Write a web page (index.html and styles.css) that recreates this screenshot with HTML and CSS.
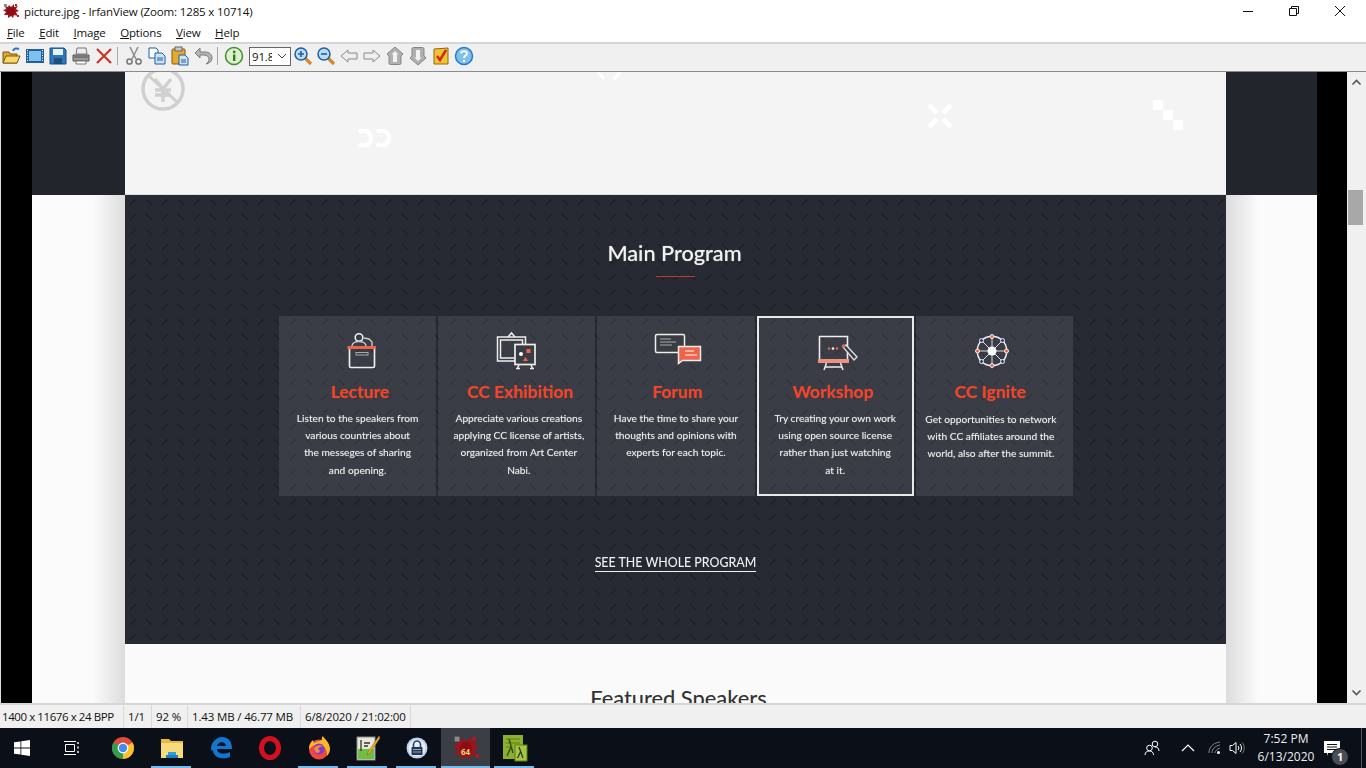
FILE: index.html
```html
<!DOCTYPE html>
<html lang="en">
<head>
    <meta charset="UTF-8">
    <title>picture.jpg - IrfanView (Zoom: 1285 x 10714)</title>
    <link rel="stylesheet" href="styles.css">
</head>
<body>

<svg class="defs" width="0" height="0">
    <symbol id="splat" viewBox="0 0 16 16">
        <path d="M6 2l2 2 3-3 0 3 4-1-2 3 3 2-3 1 2 4-4-1-1 3-2-2-3 2 0-3-4 0 2-3-3-2 3-1-1-3 3 1z" fill="#a3121a"/>
        <circle cx="8" cy="8" r="3.800" fill="#8a0e15"/>
        <path d="M1 1h3v3H1z" fill="#8c8c8c"/>
        <path d="M12 1h2v2h-2zM14 12h2v2h-2z" fill="#b5161f"/>
    </symbol>
</svg>

<!-- Title bar -->
<header class="titlebar">
    <svg class="app-icon" width="16" height="16"><use href="#splat"/></svg>
    <span class="title">picture.jpg - IrfanView (Zoom: 1285 x 10714)</span>
    <div class="win-buttons">
        <svg width="12" height="12" viewBox="0 0 12 12"><path d="M1 6.500h10" stroke="#111" fill="none"/></svg>
        <svg width="12" height="12" viewBox="0 0 12 12"><path d="M1.500 3.500h7v7h-7zM3.500 3.500v-2h7v7h-2" stroke="#111" fill="none"/></svg>
        <svg width="12" height="12" viewBox="0 0 12 12"><path d="M1 1l10 10M11 1L1 11" stroke="#111" fill="none"/></svg>
    </div>
</header>

<nav class="menubar">
    <span><u>F</u>ile</span>
    <span><u>E</u>dit</span>
    <span><u>I</u>mage</span>
    <span><u>O</u>ptions</span>
    <span><u>V</u>iew</span>
    <span><u>H</u>elp</span>
</nav>

<!-- Toolbar -->
<div class="toolbar">
    <button class="tool"><svg viewBox="0 0 20 20"><path d="M1 6h6l1 2h7v9H1z" fill="#e0a52a" stroke="#7a5a12"/><path d="M1 17l3-7h14l-3 7z" fill="#fbd766" stroke="#7a5a12"/><path d="M11 5c1-3 4-3 6-2" fill="none" stroke="#2b79c2" stroke-width="2"/></svg></button>
    <button class="tool"><svg viewBox="0 0 20 20"><rect x="1" y="3" width="18" height="14" fill="#1f5f9e"/><rect x="4" y="5" width="12" height="10" fill="#7fc0ee"/><path d="M2 4.500h1M2 7h1M2 9.500h1M2 12h1M2 14.500h1M17 4.500h1M17 7h1M17 9.500h1M17 12h1M17 14.500h1" stroke="#fff"/></svg></button>
    <button class="tool"><svg viewBox="0 0 20 20"><path d="M2 2h14l2 2v14H2z" fill="#2b78bd" stroke="#1b4f80"/><rect x="5" y="3" width="10" height="6" fill="#e8f1f8"/><rect x="6" y="12" width="8" height="6" fill="#1b4f80"/></svg></button>
    <button class="tool"><svg viewBox="0 0 20 20"><path d="M6 2h9l1 6H5z" fill="#eee" stroke="#777"/><path d="M2 9h16v6H2z" fill="#9a9a9a" stroke="#555"/><path d="M5 15h10v3H5z" fill="#fff" stroke="#777"/><path d="M3 11h14" stroke="#555"/></svg></button>
    <button class="tool"><svg viewBox="0 0 20 20"><path d="M3 3l14 14M17 3L3 17" stroke="#c9352b" stroke-width="2.200" fill="none"/></svg></button>
    <i class="tool-sep"></i>
    <button class="tool"><svg viewBox="0 0 20 20"><path d="M6 1l6 12M14 1L8 13" stroke="#8f8f8f" stroke-width="1.600" fill="none"/><circle cx="5.500" cy="15.500" r="2.600" fill="none" stroke="#777" stroke-width="1.500"/><circle cx="14.500" cy="15.500" r="2.600" fill="none" stroke="#777" stroke-width="1.500"/></svg></button>
    <button class="tool"><svg viewBox="0 0 20 20"><path d="M2 2h7l2 2v8H2z" fill="#fff" stroke="#1f5f9e"/><path d="M8 7h7l3 3v8H8z" fill="#cfe3f5" stroke="#1f5f9e"/><path d="M10 12h6M10 14h6" stroke="#1f5f9e"/></svg></button>
    <button class="tool"><svg viewBox="0 0 20 20"><rect x="2" y="3" width="13" height="15" rx="1" fill="#e8a92f" stroke="#7a5a12"/><rect x="5" y="1" width="7" height="4" fill="#c9c9c9" stroke="#666"/><path d="M9 9h6l3 3v7H9z" fill="#cfe3f5" stroke="#1f5f9e"/><path d="M11 14h5M11 16h5" stroke="#1f5f9e"/></svg></button>
    <button class="tool"><svg viewBox="0 0 20 20"><path d="M7 2L2 7l5 5V9h4c3 0 5 2 5 4s-1 4-3 5c4-1 6-3 6-6 0-4-3-6-7-6H7z" fill="#b5b5b5" stroke="#7a7a7a"/></svg></button>
    <i class="tool-sep tool-sep-b"></i>
    <button class="tool"><svg viewBox="0 0 20 20"><circle cx="10" cy="10" r="8.500" fill="#dff0d0" stroke="#3f8f2c" stroke-width="1.500"/><rect x="9" y="8.500" width="2.400" height="6.500" fill="#2f7f20"/><circle cx="10.200" cy="6" r="1.400" fill="#2f7f20"/></svg></button>
    <div class="combo"><span class="combo-val">91.8</span><svg width="10" height="6" viewBox="0 0 10 6"><path d="M1 1l4 4 4-4" fill="none" stroke="#444"/></svg></div>
    <button class="tool"><svg viewBox="0 0 20 20"><path d="M12 12l6 6" stroke="#d28a2a" stroke-width="3.200"/><circle cx="8" cy="8" r="6" fill="#bcdcf5" stroke="#1f5f9e" stroke-width="1.500"/><path d="M5 8h6M8 5v6" stroke="#1f5f9e" stroke-width="1.600"/></svg></button>
    <button class="tool"><svg viewBox="0 0 20 20"><path d="M12 12l6 6" stroke="#d28a2a" stroke-width="3.200"/><circle cx="8" cy="8" r="6" fill="#bcdcf5" stroke="#1f5f9e" stroke-width="1.500"/><path d="M5 8h6" stroke="#1f5f9e" stroke-width="1.600"/></svg></button>
    <button class="tool"><svg viewBox="0 0 20 20"><path d="M2 10l7-6v3h9v6H9v3z" fill="#eee" stroke="#8a8a8a"/></svg></button>
    <button class="tool"><svg viewBox="0 0 20 20"><path d="M18 10l-7-6v3H2v6h9v3z" fill="#eee" stroke="#8a8a8a"/></svg></button>
    <button class="tool"><svg viewBox="0 0 20 20"><path d="M10 1l8 7-2 2v7a1.500 1.500 0 01-1.500 1.500h-9A1.500 1.500 0 014 17v-7L2 8z" fill="#b0b0b0" stroke="#858585"/><path d="M10 5l3.500 3.500h-1.500V16H8V8.500H6.500z" fill="#f2f2f2"/></svg></button>
    <button class="tool"><svg viewBox="0 0 20 20"><path d="M10 19l8-7-2-2V3a1.500 1.500 0 00-1.500-1.500h-9A1.500 1.500 0 004 3v7l-2 2z" fill="#b0b0b0" stroke="#858585"/><path d="M10 15l3.500-3.500h-1.500V4H8v7.500H6.500z" fill="#f2f2f2"/></svg></button>
    <button class="tool"><svg viewBox="0 0 20 20"><path d="M3 3l14-1v16H3z" fill="#f2c230" stroke="#8a6a10"/><path d="M6 10l3 4 6-10" fill="none" stroke="#cf2a1c" stroke-width="2.500"/></svg></button>
    <button class="tool"><svg viewBox="0 0 20 20"><circle cx="10" cy="10" r="8.500" fill="#7cc0ee" stroke="#2b79c2" stroke-width="1.500"/><path d="M7 7.500c0-3 6-3 6 0 0 2-3 2-3 4.500" fill="none" stroke="#fff" stroke-width="2"/><circle cx="10" cy="15" r="1.200" fill="#fff"/></svg></button>
</div>

<!-- Image area -->
<main class="viewer">
    <div class="gutter gutter-l"></div>
    <div class="picture">

        <div class="band band-top">
            <div class="side side-dark"></div>
            <div class="hero">
                <svg class="deco deco-yen" width="46" height="46" viewBox="0 0 46 46">
                    <circle cx="23" cy="23" r="20" fill="none" stroke="#d0d0d0" stroke-width="3.500"/>
                    <path d="M15 13l8 10 8-10M23 23v13M15 24h16M15 29h16" fill="none" stroke="#d0d0d0" stroke-width="3.500"/>
                    <path d="M9 10l28 26" stroke="#d0d0d0" stroke-width="3"/>
                </svg>
                <svg class="deco deco-cc" width="36" height="18" viewBox="0 0 36 18">
                    <path d="M2 3a7.500 7.500 0 1 1 0 12M20 3a7.500 7.500 0 1 1 0 12" fill="none" stroke="#fff" stroke-width="4.500"/>
                </svg>
                <svg class="deco deco-x" width="26" height="26" viewBox="0 0 26 26">
                    <path d="M2 2l8 8M24 2l-8 8M2 24l8-8M24 24l-8-8" stroke="#fff" stroke-width="4.500"/>
                </svg>
                <svg class="deco deco-x2" width="26" height="12" viewBox="0 0 26 12">
                    <path d="M2 0l6 7M24 0l-6 7" stroke="#fff" stroke-width="3"/>
                </svg>
                <svg class="deco deco-squares" width="30" height="30" viewBox="0 0 30 30">
                    <path d="M0 0h10v10H0zM10 10h10v10H10zM20 20h10v10H20z" fill="#fff"/>
                </svg>
            </div>
            <div class="side side-dark"></div>
        </div>

        <div class="band band-mid">
            <div class="side side-light-l"></div>
            <section class="program">
                <h2>Main Program</h2>
                <div class="rule"></div>

                <div class="cards">
                    <article class="card card-lecture">
                        <svg class="card-icon" width="60" height="40" viewBox="0 0 60 40">
                            <circle cx="31" cy="6.500" r="3.800" fill="none" stroke="#eee" stroke-width="1.600"/>
                            <path d="M24 15c0-6 14-6 14 0M36 7l5 1 3 3v4" fill="none" stroke="#ccc" stroke-width="1.400"/>
                            <rect x="19.500" y="15" width="28.500" height="3" fill="#f0634a"/>
                            <path d="M21.500 18v17a1.500 1.500 0 001.500 1.500h22A1.500 1.500 0 0046.500 35V18" fill="none" stroke="#eee" stroke-width="1.700"/>
                            <rect x="28" y="21.500" width="12" height="2.500" fill="none" stroke="#aaa"/>
                        </svg>
                        <h3>Lecture</h3>
                        <p>Listen to the speakers from<br>various countries about<br>the messeges of sharing<br>and opening.</p>
                    </article>

                    <article class="card card-exhibition">
                        <svg class="card-icon" width="60" height="40" viewBox="0 0 60 40">
                            <path d="M10.500 6h28v24h-28zM13.500 9h22v18h-22z" fill="none" stroke="#eee" stroke-width="1.500"/>
                            <path d="M21 6l3.500-4 3.500 4" fill="none" stroke="#eee" stroke-width="1.500"/>
                            <rect x="28" y="13.500" width="20" height="20" fill="#3a3c44" stroke="#eee" stroke-width="1.700"/>
                            <path d="M32 34l-2 4M44 34l2 4M29 37.500h4M43 37.500h4" stroke="#eee" stroke-width="1.500"/>
                            <circle cx="34" cy="23" r="2" fill="#fff"/>
                            <rect x="39.500" y="18" width="4" height="4" fill="#f0634a"/>
                            <path d="M36 30l2.500-4 2.500 4z" fill="#f0634a"/>
                        </svg>
                        <h3>CC Exhibition</h3>
                        <p>Appreciate various creations<br>applying CC license of artists,<br>organized from Art Center<br>Nabi.</p>
                    </article>

                    <article class="card card-forum">
                        <svg class="card-icon" width="60" height="40" viewBox="0 0 60 40">
                            <path d="M10 3.500h26a1.500 1.500 0 011.500 1.500v15a1.500 1.500 0 01-1.500 1.500H10A1.500 1.500 0 018.500 20V5A1.500 1.500 0 0110 3.500z" fill="#3a3c44" stroke="#eee" stroke-width="1.500"/>
                            <path d="M13 8h11M13 11h16M13 14h12" stroke="#aaa" stroke-width="1.200"/>
                            <path d="M31.500 15.500h22v14h-18l-4 3z" fill="#f0634a" stroke="#eee" stroke-width="1.500"/>
                            <path d="M38 20h9M38 24h12" stroke="#fff"/>
                        </svg>
                        <h3>Forum</h3>
                        <p>Have the time to share your<br>thoughts and opinions with<br>experts for each topic.</p>
                    </article>

                    <article class="card card-active">
                        <svg class="card-icon" width="60" height="40" viewBox="0 0 60 40">
                            <path d="M15.500 28V5.500h28V28" fill="none" stroke="#eee" stroke-width="1.600"/>
                            <rect x="14" y="28" width="31" height="4" fill="#f0907e"/>
                            <path d="M20 39l2.500-7M39 39l-2.500-7M21 36h17" fill="none" stroke="#eee" stroke-width="1.500"/>
                            <circle cx="25" cy="17.500" r="1.300" fill="#f0634a"/>
                            <circle cx="29" cy="17.500" r="1.300" fill="#eee"/>
                            <circle cx="33" cy="17.500" r="1.300" fill="#f0634a"/>
                            <path d="M39 16l3-2 11 12-3 3z" fill="#3a3c44" stroke="#ddd" stroke-width="1.400"/>
                            <circle cx="39.500" cy="15" r="1.800" fill="#f0634a"/>
                        </svg>
                        <h3>Workshop</h3>
                        <p>Try creating your own work<br>using open source license<br>rather than just watching<br>at it.</p>
                    </article>

                    <article class="card card-ignite">
                        <svg class="card-icon" width="60" height="40" viewBox="0 0 60 40">
                            <path d="M28 5.500Q34 5 38.500 9.500Q43 14 42.500 20Q43 26 38.500 30.500Q34 35 28 34.500Q22 35 17.500 30.500Q13 26 13.500 20Q13 14 17.500 9.500Q22 5 28 5.500z" fill="none" stroke="#eee" stroke-width="1.500"/>
                            <path d="M28 20V6M28 20V34M28 20H14M28 20H42M28 20l-10-10M28 20l10-10M28 20l-10 10M28 20l10 10" stroke="#ddd" stroke-width="1"/>
                            <circle cx="28" cy="20" r="4.500" fill="#fff"/>
                            <g stroke="#eee" stroke-width="1">
                                <circle cx="28" cy="5.500" r="2" fill="#f0634a"/>
                                <circle cx="28" cy="34.500" r="2" fill="#f0634a"/>
                                <circle cx="13.500" cy="20" r="2" fill="#f0634a"/>
                                <circle cx="42.500" cy="20" r="2" fill="#f0634a"/>
                                <circle cx="17.500" cy="9.500" r="2" fill="#27408b"/>
                                <circle cx="38.500" cy="9.500" r="2" fill="#27408b"/>
                                <circle cx="17.500" cy="30.500" r="2" fill="#27408b"/>
                                <circle cx="38.500" cy="30.500" r="2" fill="#27408b"/>
                            </g>
                        </svg>
                        <h3>CC Ignite</h3>
                        <p>Get opportunities to network<br>with CC affiliates around the<br>world, also after the summit.</p>
                    </article>
                </div>

                <a class="whole" href="#">SEE THE WHOLE PROGRAM</a>
            </section>
            <div class="side side-light-r"></div>
        </div>

        <div class="band band-low">
            <div class="side side-light-l"></div>
            <section class="speakers">
                <h2>Featured Speakers</h2>
            </section>
            <div class="side side-light-r"></div>
        </div>
    </div>
    <div class="gutter gutter-r"></div>

    <div class="scrollbar">
        <svg width="11" height="7" viewBox="0 0 11 7"><path d="M1.500 5.500l4-4 4 4" fill="none" stroke="#555" stroke-width="1.600"/></svg>
        <div class="track"><div class="thumb"></div></div>
        <svg width="11" height="7" viewBox="0 0 11 7"><path d="M1.500 1.500l4 4 4-4" fill="none" stroke="#555" stroke-width="1.600"/></svg>
    </div>
</main>

<!-- Status bar -->
<footer class="statusbar">
    <span class="st st1">1400 x 11676 x 24 BPP</span>
    <span class="st st2">1/1</span>
    <span class="st st3">92 %</span>
    <span class="st st4">1.43 MB / 46.77 MB</span>
    <span class="st st5">6/8/2020 / 21:02:00</span>
</footer>

<!-- Windows taskbar -->
<div class="taskbar">
    <div class="task-left">
        <div class="task task-start"><svg width="16" height="16" viewBox="0 0 16 16"><path d="M0 2.300l6.500-.9v6.200H0zM7.300 1.300L16 0v7.600H7.300zM0 8.400h6.500v6.200L0 13.700zM7.300 8.400H16V16l-8.700-1.300z" fill="#fff"/></svg></div>
        <div class="task task-view"><svg width="16" height="16" viewBox="0 0 16 16"><path d="M2.500 4.500h9v7h-9zM1 1.500h12M1 14.500h12" fill="none" stroke="#fff"/><path d="M15 2v2M15 6.500v2M15 11v2" stroke="#fff" stroke-width="1.400"/></svg></div>
        <div class="task"><svg width="24" height="24" viewBox="0 0 24 24">
            <circle cx="12" cy="12" r="11" fill="#dd4b3a"/>
            <path d="M12 12L21.500 6.500A11 11 0 0112 23z" fill="#f7c32e"/>
            <path d="M12 12L12 23A11 11 0 012.500 6.500z" fill="#2f9e4f"/>
            <circle cx="12" cy="12" r="5.400" fill="#fff"/><circle cx="12" cy="12" r="4.200" fill="#4a8af0"/>
        </svg></div>
        <div class="task task-on"><svg width="22" height="20" viewBox="0 0 22 20">
            <path d="M0 1h8l2 2h12v3H0z" fill="#e7b93f"/>
            <rect x="0" y="5" width="22" height="15" fill="#f8da7c"/>
            <path d="M7 19v-5h8v5z" fill="#2c9fd6"/><path d="M5 20h12v-3H5z" fill="#1f7fbf"/>
        </svg></div>
        <div class="task"><svg width="22" height="22" viewBox="0 0 22 22">
            <path d="M1 11C2 4 7 0 12 0c6 0 10 4 10 12H7c0 5 8 6 13 3v5c-7 3-17 1-17-7-1 1-1.500 2-2-2zm6-2h9c0-5-8-5-9 0z" fill="#0f78d4"/>
        </svg></div>
        <div class="task"><svg width="24" height="24" viewBox="0 0 24 24">
            <ellipse cx="12" cy="12" rx="8.500" ry="9.500" fill="none" stroke="#d3101f" stroke-width="5"/>
        </svg></div>
        <div class="task task-on"><svg width="24" height="24" viewBox="0 0 24 24">
            <circle cx="12" cy="13.500" r="10" fill="#f2473f"/>
            <path d="M2 13C2 8 4 6 6 4c0 2 1 3 2 3 2-2 5-2 7-3 0 0-1-2 1-4 1 3 7 6 7 13 0 2-1 5-3 7C21 12 14 6 8 9c-3 1-4 3-6 4z" fill="#fcb62c"/>
            <circle cx="12" cy="13" r="5.500" fill="#7d3fc2"/>
            <path d="M7 12c2-3 7-4 10-1-3-1-5 0-6 2 2 1 3 3 0 4-2 0-4-2-4-5z" fill="#f7883a"/>
        </svg></div>
        <div class="task task-on"><svg width="24" height="26" viewBox="0 0 24 26">
            <rect x="1" y="2" width="18" height="23" fill="#e8e8d8" stroke="#888"/>
            <rect x="2" y="14" width="16" height="10" fill="#6fbe44"/>
            <path d="M5 5v11M8 8h6M8 11h4" stroke="#333" stroke-width="1.300"/>
            <path d="M23 1L12 17l-1 3 3-2L24 3z" fill="#e8b23a" stroke="#8a6512" stroke-width=".6"/>
        </svg></div>
        <div class="task task-on"><svg width="22" height="22" viewBox="0 0 22 22">
            <circle cx="11" cy="11" r="10.500" fill="#bcd1ee"/><circle cx="11" cy="11" r="8.500" fill="#e8effa"/>
            <path d="M7.500 10V7.500a3.500 3.500 0 017 0V10" fill="none" stroke="#2a3f66" stroke-width="1.600"/>
            <rect x="5.500" y="10" width="11" height="8" rx="1" fill="#27344e"/>
            <path d="M7 12.500h8M7 15h8" stroke="#8ea8d4"/>
        </svg></div>
        <div class="task task-active"><svg width="26" height="26"><use href="#splat"/></svg><span class="badge">64</span></div>
        <div class="task task-on"><svg width="26" height="28" viewBox="0 0 26 28">
            <rect x="1" y="1" width="20" height="24" fill="#8ab02e"/>
            <path d="M4 5h14M4 9h14M4 13h6" stroke="#5f7f1a"/>
            <rect x="13" y="11" width="12" height="16" fill="#a6c640" stroke="#5f7f1a"/>
            <path d="M15.500 24l3-6M17 13l4 11" fill="none" stroke="#333" stroke-width="1.300"/>
            <path d="M5 22l4-9M7 5l4 14" fill="none" stroke="#3a4a10" stroke-width="1.400"/>
        </svg></div>
    </div>

    <div class="tray">
        <svg class="tray-people" width="16" height="16" viewBox="0 0 16 16"><circle cx="5.500" cy="8" r="2.800" fill="none" stroke="#fff"/><circle cx="11" cy="4" r="2.800" fill="none" stroke="#fff"/><path d="M1 15c0-3 2-4 4.500-4s4 1.500 4 4M11 7c2 0 4 1 4 4" fill="none" stroke="#fff"/></svg>
        <svg class="tray-up" width="14" height="8" viewBox="0 0 14 8"><path d="M1 7l6-6 6 6" fill="none" stroke="#fff" stroke-width="1.200"/></svg>
        <svg class="tray-wifi" width="14" height="14" viewBox="0 0 14 14"><path d="M1 12c0-6 4-10 11-11M4 12c0-4 3-7 8-8M7 12c0-2 2-4 5-5" fill="none" stroke="#888"/><circle cx="10.500" cy="11.500" r="1.500" fill="#fff"/></svg>
        <svg class="tray-sound" width="16" height="14" viewBox="0 0 16 14"><path d="M1 4.500h2.500L7 1.500v11l-3.500-3H1z" fill="none" stroke="#fff"/><path d="M9 5c1 1 1 3 0 4M11 3c2 2 2 6 0 8" fill="none" stroke="#fff"/><path d="M13 1.500c3 3 3 8 0 11" fill="none" stroke="#777"/></svg>
        <div class="clock"><div>7:52 PM</div><div>6/13/2020</div></div>
        <div class="notif">
            <svg width="16" height="15" viewBox="0 0 16 15"><path d="M0 0h16v12H4l-1 3v-3H0z" fill="#fff"/><path d="M3 3.500h10M3 6h10M3 8.500h10" stroke="#111"/></svg>
            <span class="notif-count">1</span>
        </div>
        <i class="show-desktop"></i>
    </div>
</div>

</body>
</html>
```

FILE: styles.css
```css
/* Page */
html, body {
    margin: 0;
    padding: 0;
    height: 768px;
    overflow: hidden;
}

body {
    display: flex;
    flex-direction: column;
    width: 1366px;
    font-family: "Open Sans", "Noto Sans", sans-serif;
    font-size: 11.5px;
    letter-spacing: -0.15px;
    color: #111;
    background: #fff;
}

.defs {
    position: absolute;
}

/* Title bar */
.titlebar {
    display: flex;
    align-items: center;
    height: 22px;
    padding: 0 20px 0 3px;
    background: #fff;
    flex: none;
}

.app-icon {
    margin-right: 5px;
}

.title {
    font-size: 11.5px;
    white-space: nowrap;
}

.win-buttons {
    display: flex;
    gap: 34px;
    margin-left: auto;
}

/* Menu */
.menubar {
    display: flex;
    gap: 14.500px;
    height: 20px;
    padding-left: 7px;
    align-items: center;
    background: #fff;
    flex: none;
}

/* Toolbar */
.toolbar {
    display: flex;
    align-items: center;
    height: 24px;
    padding-bottom: 3px;
    background: #f0f0f0;
    border-top: 2px solid #d6d6d6;
    border-bottom: 1px solid #8c8c8c;
    flex: none;
}

.tool {
    width: 23px;
    height: 23px;
    padding: 0;
    border: 0;
    background: none;
    display: flex;
    align-items: center;
    justify-content: center;
}

.tool svg {
    width: 20px;
    height: 20px;
}

.tool-sep {
    width: 1px;
    height: 18px;
    margin: 0 4px 0 2px;
    background: #a8a8a8;
}

.tool-sep-b {
    margin-left: 3px;
}

.combo {
    display: flex;
    align-items: center;
    justify-content: space-between;
    box-sizing: border-box;
    width: 42px;
    height: 19px;
    margin-left: 4px;
    padding: 0 3px 0 2px;
    background: #fff;
    border: 1px solid #666;
    font-size: 11.5px;
}

.combo-val {
    width: 20px;
    overflow: hidden;
}

/* Image area */
.viewer {
    display: flex;
    height: 633px;
    flex: none;
    background: #000;
    border-bottom: 2px solid #d6d6d6;
    box-sizing: border-box;
}

.gutter {
    width: 32px;
    flex: none;
    box-sizing: border-box;
}

.gutter-l {
    border-left: 1px solid #ddd;
}

.gutter-r {
    width: 30px;
}

.picture {
    width: 1285px;
    flex: none;
    display: flex;
    flex-direction: column;
    overflow: hidden;
}

.band {
    display: grid;
    grid-template-columns: 93px 1101px 91px;
    flex: none;
}

.band-top {
    height: 123px;
}

.band-mid {
    height: 449px;
}

.band-low {
    height: 60px;
}

.side-dark {
    background: #22252c;
}

.side-light-l {
    background: linear-gradient(to left, #dcdcdc, #fbfbfb 32px);
}

.side-light-r {
    background: linear-gradient(to right, #dcdcdc, #fbfbfb 32px);
}

/* Top part of the picture, the floating shapes */
.hero {
    position: relative;
    overflow: hidden;
    background: #f4f4f4;
    border-bottom: 1px solid #ddd;
    filter: blur(0.3px);
}

.deco {
    position: absolute;
}

.deco-yen {
    left: 15px;
    top: -6px;
}

.deco-cc {
    left: 232px;
    top: 57px;
}

.deco-x {
    left: 802px;
    top: 31px;
}

.deco-x2 {
    left: 471px;
    top: 0;
}

.deco-squares {
    left: 1028px;
    top: 28px;
}

/* Main Program */
.program {
    display: flex;
    flex-direction: column;
    align-items: center;
    background-color: #272a33;
    background-image: url("data:image/svg+xml,%3Csvg xmlns='http://www.w3.org/2000/svg' width='32' height='30'%3E%3Cpath d='M5 10l6-6M21 4l6 6M21 19l6 6M5 25l6-6' stroke='%231e2027' stroke-width='1.500' fill='none'/%3E%3C/svg%3E");
    filter: blur(0.35px);
    letter-spacing: 0;
}

.program h2 {
    margin: 43px 0 0;
    padding-right: 2px;
    font-family: Lato, sans-serif;
    font-size: 21.700px;
    font-weight: 500;
    line-height: 30px;
    color: #f2f2f2;
    text-shadow: 0 0 1px rgba(255, 255, 255, 0.5);
}

.rule {
    width: 39px;
    height: 1px;
    margin-top: 8px;
    background: #c0392b;
}

.cards {
    display: grid;
    grid-template-columns: repeat(5, 1fr);
    gap: 2px;
    width: 794px;
    height: 180px;
    margin: 39px 0 0 1px;
}

.card {
    display: flex;
    flex-direction: column;
    align-items: center;
    padding-top: 15px;
    background: rgba(255, 255, 255, 0.09);
    text-align: center;
    font-family: Lato, sans-serif;
    box-sizing: border-box;
}

.card-active {
    outline: 2px solid #e9e9e9;
    outline-offset: -2px;
}

.card-icon {
    flex: none;
}

.card h3 {
    margin: 9px 0 0;
    font-size: 17.500px;
    font-weight: 700;
    line-height: 24px;
    color: #f0452c;
    text-shadow: 0 0 1px rgba(240, 69, 44, 0.7);
}

.card p {
    margin: 6px 0 0;
    font-size: 10.200px;
    font-weight: 400;
    line-height: 17.200px;
    color: #ececec;
    text-shadow: 0 0 1px rgba(255, 255, 255, 0.45);
}

/* the titles do not sit quite in the middle of their cards */
.card-lecture h3 {
    padding-left: 5px;
}

.card-exhibition h3 {
    padding-left: 7px;
}

.card-exhibition p {
    padding-left: 4px;
}

.card-forum h3 {
    padding-left: 3px;
}

.card-forum .card-icon {
    margin-left: 2px;
}

.card-active h3 {
    padding-right: 4px;
}

.card-active .card-icon {
    margin-right: 2px;
}

.card-ignite h3 {
    padding-right: 8px;
}

.card-ignite p {
    margin-top: 7px;
    padding-right: 7px;
}

.whole {
    margin-top: 59px;
    font-family: Lato, sans-serif;
    font-size: 12.400px;
    font-weight: 500;
    line-height: 16px;
    color: #f0f0f0;
    text-decoration: none;
    border-bottom: 1px solid #f0f0f0;
}

/* Featured Speakers */
.speakers {
    padding-left: 6px;
    background: #fafafa;
    text-align: center;
    overflow: hidden;
    letter-spacing: 0;
}

.speakers h2 {
    margin: 40px 0 0;
    font-family: Lato, sans-serif;
    font-size: 21.800px;
    font-weight: 500;
    line-height: 28px;
    color: #333;
}

/* Scrollbar */
.scrollbar {
    width: 19px;
    flex: none;
    display: flex;
    flex-direction: column;
    align-items: center;
    background: #f0f0f0;
    padding: 7px 0;
    box-sizing: border-box;
}

.track {
    flex: 1;
    width: 100%;
    padding-top: 104px;
    box-sizing: border-box;
}

.thumb {
    width: 15px;
    height: 35px;
    margin-left: 1px;
    background: #a8a8a8;
}

/* Status bar */
.statusbar {
    display: flex;
    height: 23px;
    background: #f0f0f0;
    flex: none;
    align-items: stretch;
    white-space: nowrap;
}

.st {
    display: flex;
    align-items: center;
    padding-left: 2px;
    box-sizing: border-box;
    border-right: 1px solid #d9d9d9;
}

.st1 {
    width: 124px;
    letter-spacing: -0.42px;
}

.st2 {
    width: 28px;
    padding-left: 4px;
}

.st3 {
    width: 36px;
    padding-left: 4px;
}

.st4 {
    width: 113px;
    padding-left: 4px;
}

.st5 {
    width: 110px;
    padding-left: 4px;
}

/* Taskbar */
.taskbar {
    display: flex;
    justify-content: space-between;
    height: 40px;
    background: #0a0f18;
    flex: none;
}

.task-left {
    display: flex;
}

.task {
    position: relative;
    width: 49px;
    display: flex;
    align-items: center;
    justify-content: center;
}

.task-start {
    width: 44px;
}

.task-view {
    width: 54px;
}

.task-on::after,
.task-active::after {
    content: "";
    position: absolute;
    left: 4px;
    right: 5px;
    bottom: 0;
    height: 2px;
    background: #76b9ed;
}

.task-active {
    background: #3b3e45;
}

.task-active::after {
    left: 0;
    right: 0;
}

.badge {
    position: absolute;
    left: 20px;
    top: 18px;
    font-size: 8px;
    font-weight: 700;
    color: #f5d76e;
}

.tray {
    display: flex;
    align-items: center;
    color: #fff;
}

.tray-people {
    margin-right: 21px;
}

.tray-up {
    margin-right: 13px;
}

.tray-wifi {
    margin-right: 7px;
}

.tray-sound {
    margin-right: 6px;
}

.clock {
    width: 70px;
    text-align: center;
    font-size: 12px;
    letter-spacing: 0;
    line-height: 18px;
    color: #eee;
}

.notif {
    position: relative;
    display: flex;
    margin-left: 3px;
    margin-right: 17px;
    width: 20px;
}

.notif-count {
    position: absolute;
    left: 7px;
    top: 7px;
    width: 16px;
    height: 16px;
    border-radius: 50%;
    background: #4a4d52;
    border: 1px solid #0a0f18;
    font-size: 11px;
    font-weight: 700;
    line-height: 16px;
    text-align: center;
}

.show-desktop {
    width: 1px;
    height: 40px;
    margin-right: 4px;
    background: #555;
}
```
